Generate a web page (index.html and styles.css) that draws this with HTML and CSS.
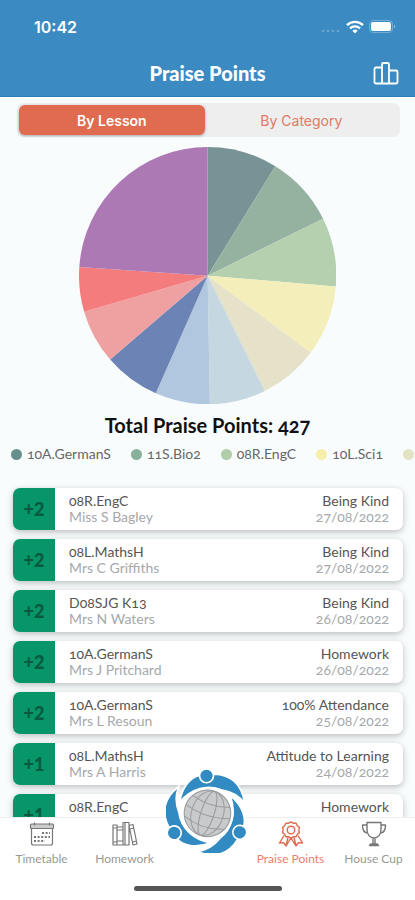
FILE: index.html
```html
<!DOCTYPE html>
<html lang="en">
<head>
    <meta charset="UTF-8">
    <meta name="viewport" content="width=device-width, initial-scale=1.0">
    <title>Praise Points</title>
    <link rel="stylesheet" href="styles.css">
</head>
<body>
    <header class="header">
        <div class="status-bar">
            <span class="time">10:42</span>
            <div class="status-icons">
                <svg width="20" height="4" viewBox="0 0 20 4" fill="#69a5cf">
                    <circle cx="2" cy="2" r="1.3"/><circle cx="7" cy="2" r="1.3"/><circle cx="12" cy="2" r="1.3"/><circle cx="17" cy="2" r="1.3"/>
                </svg>
                <svg width="18" height="14" viewBox="0 0 18 14" fill="none" stroke="#fff" stroke-width="2.4">
                    <path d="M1 5.2a11.4 11.4 0 0 1 16 0M4 8.4a7.2 7.2 0 0 1 10 0"/>
                    <path d="M6.4 10.8a3.8 3.8 0 0 1 5.2 0L9 13.4z" fill="#fff" stroke="none"/>
                </svg>
                <svg width="27" height="14" viewBox="0 0 27 14">
                    <rect x=".5" y=".5" width="23" height="12" rx="3.5" fill="none" stroke="#74acd5"/>
                    <rect x="2" y="2" width="20" height="9" rx="2" fill="#fff"/>
                    <path d="M25 4.5c1.6.6 1.6 3.4 0 4z" fill="#8fbddd"/>
                </svg>
            </div>
        </div>
        <div class="title-bar">
            <h1>Praise Points</h1>
            <button type="button" class="chart-btn" aria-label="Leaderboard">
                <svg width="26" height="24" viewBox="0 0 26 24" fill="none" stroke="#fff" stroke-width="1.8" stroke-linejoin="round">
                    <path d="M9 22.5H3a1.5 1.5 0 0 1-1.5-1.5V8A1.5 1.5 0 0 1 3 6.5h6M9 22.5V3.5A1.5 1.5 0 0 1 10.5 2h4A1.5 1.5 0 0 1 16 3.5v19zM16 9.5h7a1.5 1.5 0 0 1 1.5 1.5v10a1.5 1.5 0 0 1-1.5 1.5h-7"/>
                </svg>
            </button>
        </div>
    </header>

    <main class="content">
        <div class="segmented">
            <button type="button" class="segment active">By Lesson</button>
            <button type="button" class="segment">By Category</button>
        </div>

        <svg class="pie" viewBox="0 0 256 256">
            <path fill="#789395" d="M128 128V0A128 128 0 0 1 195.3 19.1z"/>
            <path fill="#94b29f" d="M128 128L195.3 19.1A128 128 0 0 1 242.9 71.5z"/>
            <path fill="#b4d0af" d="M128 128L242.9 71.5A128 128 0 0 1 255.5 138.9z"/>
            <path fill="#f4efba" d="M128 128L255.5 138.9A128 128 0 0 1 230.5 204.7z"/>
            <path fill="#e5e2c9" d="M128 128L230.5 204.7A128 128 0 0 1 184.9 242.7z"/>
            <path fill="#c5d8e1" d="M128 128L184.9 242.7A128 128 0 0 1 130.2 256z"/>
            <path fill="#b1c7df" d="M128 128L130.2 256A128 128 0 0 1 76.4 245.1z"/>
            <path fill="#6b83b5" d="M128 128L76.4 245.1A128 128 0 0 1 31 211.5z"/>
            <path fill="#efa0a0" d="M128 128L31 211.5A128 128 0 0 1 5.1 163.9z"/>
            <path fill="#f47c7c" d="M128 128L5.1 163.9A128 128 0 0 1 .3 119.3z"/>
            <path fill="#ad79b4" d="M128 128L.3 119.3A128 128 0 0 1 128 0z"/>
        </svg>

        <h2 class="total">Total Praise Points: 427</h2>

        <ul class="legend">
            <li><span class="dot teal"></span>10A.GermanS</li>
            <li><span class="dot green"></span>11S.Bio2</li>
            <li><span class="dot light-green"></span>08R.EngC</li>
            <li><span class="dot yellow"></span>10L.Sci1</li>
            <li><span class="dot beige"></span></li>
        </ul>

        <ul class="points-list">
            <li class="point-card">
                <div class="badge">+2</div>
                <div class="lesson"><p class="main-text">08R.EngC</p><p class="sub-text">Miss S Bagley</p></div>
                <div class="reason"><p class="main-text">Being Kind</p><p class="sub-text">27/08/2022</p></div>
            </li>
            <li class="point-card">
                <div class="badge">+2</div>
                <div class="lesson"><p class="main-text">08L.MathsH</p><p class="sub-text">Mrs C Griffiths</p></div>
                <div class="reason"><p class="main-text">Being Kind</p><p class="sub-text">27/08/2022</p></div>
            </li>
            <li class="point-card">
                <div class="badge">+2</div>
                <div class="lesson"><p class="main-text">D08SJG K13</p><p class="sub-text">Mrs N Waters</p></div>
                <div class="reason"><p class="main-text">Being Kind</p><p class="sub-text">26/08/2022</p></div>
            </li>
            <li class="point-card">
                <div class="badge">+2</div>
                <div class="lesson"><p class="main-text">10A.GermanS</p><p class="sub-text">Mrs J Pritchard</p></div>
                <div class="reason"><p class="main-text">Homework</p><p class="sub-text">26/08/2022</p></div>
            </li>
            <li class="point-card">
                <div class="badge">+2</div>
                <div class="lesson"><p class="main-text">10A.GermanS</p><p class="sub-text">Mrs L Resoun</p></div>
                <div class="reason"><p class="main-text">100% Attendance</p><p class="sub-text">25/08/2022</p></div>
            </li>
            <li class="point-card">
                <div class="badge">+1</div>
                <div class="lesson"><p class="main-text">08L.MathsH</p><p class="sub-text">Mrs A Harris</p></div>
                <div class="reason"><p class="main-text">Attitude to Learning</p><p class="sub-text">24/08/2022</p></div>
            </li>
            <li class="point-card">
                <div class="badge">+1</div>
                <div class="lesson"><p class="main-text">08R.EngC</p></div>
                <div class="reason"><p class="main-text">Homework</p></div>
            </li>
        </ul>
    </main>

    <nav class="tab-bar">
        <div class="tabs">
            <a href="#" class="tab">
                <svg width="26" height="26" viewBox="0 0 26 26" fill="none" stroke="#777" stroke-width="1.2">
                    <rect x="1.5" y="3" width="23" height="4.5" rx="1" fill="#ccc"/>
                    <path d="M2.5 7.5V22a2 2 0 0 0 2 2h17a2 2 0 0 0 2-2V7.5M5.5 1.5v3M20.5 1.5v3"/>
                    <path d="M13 12h8M5 16h16M5 20h11" stroke-width="2" stroke-dasharray="2 1.6"/>
                </svg>
                <span>Timetable</span>
            </a>
            <a href="#" class="tab">
                <svg width="26" height="26" viewBox="0 0 26 26" fill="none" stroke="#777" stroke-width="1.2" stroke-linejoin="round">
                    <path d="M1 4h4v20H1zM5 6h6v18H5zM5 9h6M5 20h6M11 1.5h6V24h-6zM13 1.5V24M17 4.5l4-1L25 23l-4 1zM1 7h4M1 21h4M18 8l4-1M20.5 21l4-1"/>
                </svg>
                <span>Homework</span>
            </a>
            <a href="#" class="tab home" aria-label="Home">
                <svg class="logo" viewBox="-123 -137 250 255">
                    <defs>
                        <g id="person">
                            <path d="M-82-34C-74-84-46-110-22-115L22-119C70-118 106-90 113-32C100-50 78-66 46-71C0-90-50-74-82-34z"/>
                            <circle cx="-1" cy="-114" r="21"/>
                        </g>
                    </defs>
                    <circle r="98" fill="#fff"/>
                    <g fill="#318ac1" stroke="#fff" stroke-width="5">
                        <use href="#person"/>
                        <use href="#person" transform="rotate(120)"/>
                        <use href="#person" transform="rotate(240)"/>
                    </g>
                    <circle r="75" cx="2" cy="-1" fill="#c9cacc" stroke="#fff" stroke-width="7"/>
                    <g transform="translate(2 -1) rotate(18)" fill="none" stroke="#999b9e" stroke-width="3">
                        <circle r="70"/>
                        <ellipse rx="48" ry="69"/>
                        <ellipse rx="20" ry="69"/>
                        <path d="M-58-37Q0-18 58-37M-69-5Q0 18 69-5M-62 30Q0 54 62 30"/>
                    </g>
                </svg>
            </a>
            <a href="#" class="tab active">
                <svg width="26" height="26" viewBox="0 0 26 26" fill="none" stroke="#e0694e" stroke-width="1.4" stroke-linejoin="round">
                    <path d="M13 1l2.4 1.2 2.7.1 1.2 2.4 2.1 1.7-.5 2.6.5 2.6-2.1 1.7-1.2 2.4-2.7.1L13 17l-2.4-1.2-2.7-.1-1.2-2.4-2.1-1.7.5-2.6-.5-2.6 2.1-1.7 1.2-2.4 2.7-.1z"/>
                    <circle cx="13" cy="9" r="3.8"/>
                    <path d="M6 14.5L1.5 22l4.2-.4L8 25l5-8 5 8 2.3-3.4 4.2.4L20 14.5M10 16.5L8 25M16 16.5L18 25"/>
                </svg>
                <span>Praise Points</span>
            </a>
            <a href="#" class="tab">
                <svg width="26" height="26" viewBox="0 0 26 26" fill="none" stroke="#777" stroke-width="1.4" stroke-linejoin="round">
                    <path d="M6 1.5h14v7c0 5-3 8.5-7 8.5s-7-3.5-7-8.5zM6 4H1.5c0 5 1.5 8 5.5 8M20 4h4.5c0 5-1.5 8-5.5 8M12 17v6h2v-6M8.5 24.5a2 2 0 0 1 2-1.5h5a2 2 0 0 1 2 1.5z"/>
                </svg>
                <span>House Cup</span>
            </a>
        </div>
        <div class="home-indicator"></div>
    </nav>
</body>
</html>
```
FILE: styles.css
```css
* {
    margin: 0;
    padding: 0;
    box-sizing: border-box;
}

body {
    display: flex;
    flex-direction: column;
    height: 100vh;
    font-family: Lato, sans-serif;
    font-variant-numeric: oldstyle-nums;
    background: #f9fcfd;
    color: #555;
}

ul {
    list-style: none;
}

button {
    border: none;
    background: none;
    cursor: pointer;
}

.header {
    background: #3b8bc2;
    color: white;
    border-bottom: 1px solid #2b7fb8;
    padding: 14px 16px 8px 34px;
}

.status-bar {
    display: flex;
    justify-content: space-between;
    align-items: center;
    height: 26px;
}

.time {
    font-family: Inter, sans-serif;
    font-variant-numeric: normal;
    font-size: 16px;
    font-weight: 600;
}

.status-icons {
    display: flex;
    align-items: center;
    gap: 5px;
    padding-right: 3px;
}

.status-icons svg:first-child {
    margin-top: 8px;
}

.title-bar {
    display: grid;
    grid-template-columns: 1fr auto 1fr;
    align-items: center;
    height: 48px;
    padding-top: 18px;
    margin-left: -18px;
}

.title-bar h1 {
    grid-column: 2;
    font-size: 20px;
    font-weight: 900;
    line-height: 30px;
}

.chart-btn {
    justify-self: end;
    height: 24px;
}

.content {
    flex: 1;
    min-height: 0;
    overflow: hidden;
}

.segmented {
    display: flex;
    margin: 6px 15px 10px 17px;
    padding: 2px;
    border-radius: 7px;
    background: #eee;
}

.segment {
    flex: 1;
    height: 30px;
    border-radius: 6px;
    font-family: Inter, sans-serif;
    font-size: 14px;
    color: #e07863;
}

.segment.active {
    flex: 0 0 49%;
    background: #e06b50;
    color: white;
    font-weight: 600;
    box-shadow: 0 1px 3px rgba(0, 0, 0, 0.3);
}

.pie {
    display: block;
    width: 62%;
    margin: 0 auto;
}

.total {
    margin-top: 8px;
    font-size: 20px;
    line-height: 26px;
    text-align: center;
    color: #111;
}

.legend {
    display: flex;
    gap: 20px;
    margin-top: 6px;
    padding-left: 11px;
    overflow: hidden;
    font-size: 14px;
    line-height: 20px;
    white-space: nowrap;
}

.legend li {
    display: flex;
    align-items: center;
    gap: 5px;
    color: #666;
}

.dot {
    width: 11px;
    height: 11px;
    border-radius: 50%;
}

.teal {
    background: #66908b;
}

.green {
    background: #89b09b;
}

.light-green {
    background: #b1cda9;
}

.yellow {
    background: #f5efaa;
}

.beige {
    background: #e1e3c2;
}

.points-list {
    display: flex;
    flex-direction: column;
    gap: 9px;
    margin-top: 24px;
    padding: 0 12px 0 13px;
}

.point-card {
    display: flex;
    flex-shrink: 0;
    height: 42px;
    overflow: hidden;
    border-radius: 7px;
    background: white;
    box-shadow: 0 2px 6px rgba(0, 0, 0, 0.25);
}

.badge {
    display: flex;
    align-items: center;
    justify-content: center;
    width: 42px;
    background: #069669;
    color: #08593f;
    font-size: 18px;
    font-weight: 900;
    font-variant-numeric: lining-nums;
}

.lesson {
    flex: 1;
    padding: 5px 14px;
}

.reason {
    padding: 5px 14px;
    text-align: right;
}

.main-text {
    font-size: 14px;
    line-height: 16px;
}

.sub-text {
    font-size: 14px;
    line-height: 16px;
    color: #a5a8ac;
}

.tab-bar {
    height: 83px;
    background: white;
    border-top: 1px solid #eee;
}

.tabs {
    display: grid;
    grid-template-columns: repeat(5, 1fr);
}

.tab {
    position: relative;
    display: flex;
    flex-direction: column;
    align-items: center;
    gap: 3px;
    padding-top: 3px;
    font-size: 12px;
    line-height: 18px;
    color: #999;
    text-decoration: none;
    white-space: nowrap;
}

.tab.active {
    color: #e8806c;
}

/* the logo button rises above the bar */
.logo {
    position: absolute;
    top: -50px;
    width: 83px;
    height: 85px;
}

.home-indicator {
    width: 148px;
    height: 5px;
    margin: 18px auto 0;
    border-radius: 3px;
    background: #555;
}
```
